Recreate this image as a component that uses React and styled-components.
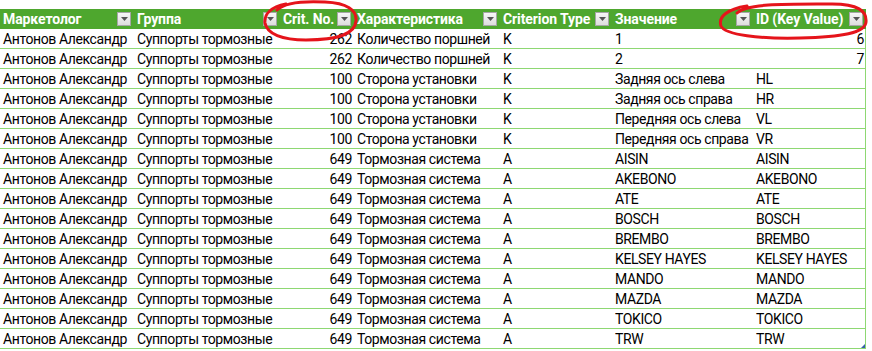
import React from 'react';
import styled, { createGlobalStyle } from 'styled-components';

const GlobalStyle = createGlobalStyle`
  body {
    margin: 0;
    background: #ffffff;
    font-family: Roboto, "Liberation Sans", sans-serif;
  }
`;

const columns = [
  { title: 'Маркетолог', width: 134 },
  { title: 'Группа', width: 146 },
  { title: 'Crit. No.', width: 74, right: true },
  { title: 'Характеристика', width: 146 },
  { title: 'Criterion Type', width: 112 },
  { title: 'Значение', width: 141 },
  { title: 'ID (Key Value)', width: 113, right: true },
];

const head = ['Антонов Александр', 'Суппорты тормозные'];

const rows = [
  [...head, '262', 'Количество поршней', 'K', '1', '6'],
  [...head, '262', 'Количество поршней', 'K', '2', '7'],
  [...head, '100', 'Сторона установки', 'K', 'Задняя ось слева', 'HL'],
  [...head, '100', 'Сторона установки', 'K', 'Задняя ось справа', 'HR'],
  [...head, '100', 'Сторона установки', 'K', 'Передняя ось слева', 'VL'],
  [...head, '100', 'Сторона установки', 'K', 'Передняя ось справа', 'VR'],
  ...['AISIN', 'AKEBONO', 'ATE', 'BOSCH', 'BREMBO', 'KELSEY HAYES', 'MANDO', 'MAZDA', 'TOKICO', 'TRW'].map(
    (brand) => [...head, '649', 'Тормозная система', 'A', brand, brand]
  ),
];

// numbers in the last column are right aligned, text codes stay left
const isNumber = (v) => /^\d+$/.test(v);

export default function App() {
  return (
    <Sheet>
      <GlobalStyle />
      <Table>
        {columns.map((c) => (
          <HeaderCell key={c.title}>
            <span>{c.title}</span>
            <FilterButton>
              <svg width="7" height="4" viewBox="0 0 7 4">
                <path d="M0 0 H7 L3.5 4 Z" fill="#555" />
              </svg>
            </FilterButton>
          </HeaderCell>
        ))}
        {rows.map((row, i) =>
          row.map((value, j) => (
            <Cell key={i + '-' + j} $right={columns[j].right && isNumber(value)}>
              {value}
            </Cell>
          ))
        )}
      </Table>
      <ResizeHandle />
      <Marks width="872" height="60" viewBox="0 0 872 60">
        <path
          d="M277 10 C285 2, 305 1, 325 2 C347 3, 357 10, 356 21 C355 34, 336 40, 306 40 C282 40, 267 34, 265 23 C264 14, 271 7, 286 4"
        />
        <path
          d="M737 13 C747 3, 790 4, 832 4 C858 4, 867 11, 866 22 C865 33, 842 37, 800 38 C760 39, 725 35, 721 26 C718 17, 727 9, 747 6"
        />
      </Marks>
    </Sheet>
  );
}

const Sheet = styled.div`
  position: relative;
  width: 872px;
  padding-top: 9px;
`;

const Table = styled.div`
  display: grid;
  grid-template-columns: ${columns.map((c) => c.width + 'px').join(' ')};
  width: 866px;
  border-right: 1px solid #8ed873;
  box-sizing: border-box;
`;

const HeaderCell = styled.div`
  display: flex;
  align-items: center;
  justify-content: space-between;
  height: 20px;
  padding: 0 3px 0 3px;
  background: #4ea72e;
  color: #ffffff;
  font-size: 14px;
  font-weight: 700;
  letter-spacing: -0.1px;
  white-space: nowrap;
  overflow: hidden;
`;

const FilterButton = styled.div`
  display: flex;
  align-items: center;
  justify-content: center;
  flex: none;
  width: 14px;
  height: 14px;
  background: linear-gradient(#f6f6f6, #dedede);
  border: 1px solid #a6a6a6;
  box-sizing: border-box;
`;

const Cell = styled.div`
  height: 20px;
  line-height: 20px;
  padding: 0 ${(p) => (p.$right ? '2px' : '0')} 0 3px;
  text-align: ${(p) => (p.$right ? 'right' : 'left')};
  border-bottom: 1px solid #8ed873;
  box-sizing: border-box;
  color: #000000;
  font-size: 14px;
  letter-spacing: -0.4px;
  white-space: nowrap;
  overflow: hidden;
`;

const ResizeHandle = styled.div`
  position: absolute;
  left: 861px;
  top: 344px;
  width: 0;
  height: 0;
  border-left: 4px solid transparent;
  border-bottom: 4px solid #3a5fa8;
`;

const Marks = styled.svg`
  position: absolute;
  left: 0;
  top: 0;
  pointer-events: none;
  path {
    fill: none;
    stroke: #e5141b;
    stroke-width: 3;
    stroke-linecap: round;
  }
`;
